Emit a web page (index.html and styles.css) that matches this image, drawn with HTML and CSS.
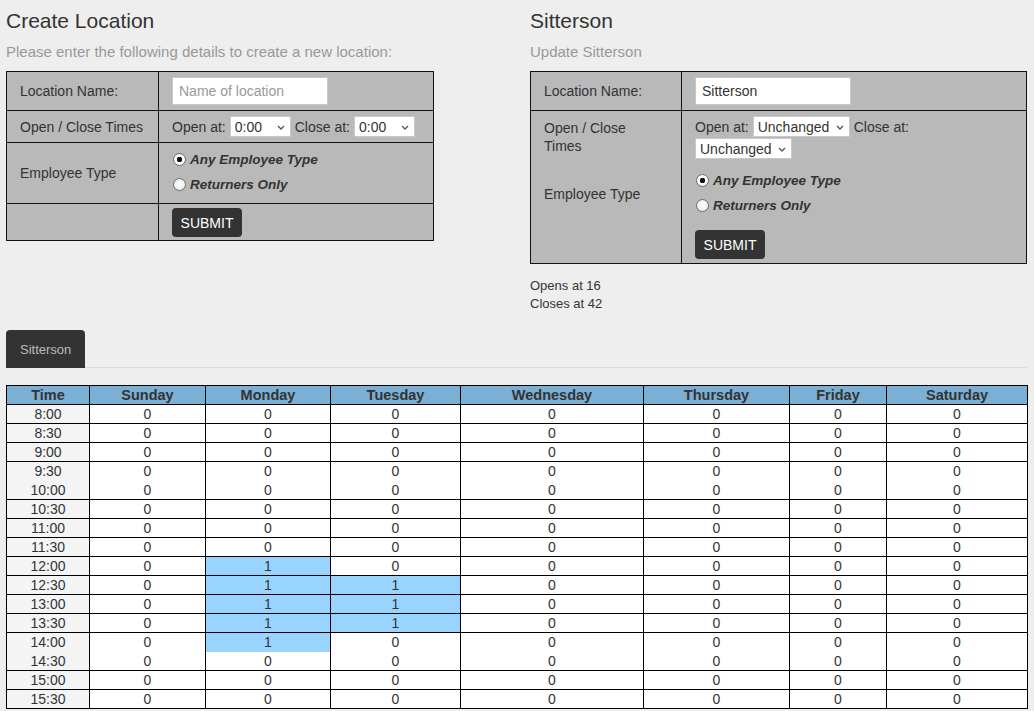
FILE: index.html
```html
<!DOCTYPE html>
<html>
<head>
<meta charset="utf-8">
<title>Locations</title>
<link rel="stylesheet" href="styles.css">
</head>
<body>
<div class="top">
  <section class="col">
    <h2 class="title">Create Location</h2>
    <p class="sub">Please enter the following details to create a new location:</p>
    <table class="form form-left">
      <tr>
        <td class="lbl">Location Name:</td>
        <td class="fld"><input class="txt" type="text" placeholder="Name of location"></td>
      </tr>
      <tr>
        <td class="lbl">Open / Close Times</td>
        <td class="fld">
          <div class="times">
            <span>Open at:</span>
            <span class="sel sel-s"><select><option>0:00</option></select><svg class="chev" viewBox="0 0 8 5" width="8" height="5"><path d="M1 1l3 3 3-3" fill="none" stroke="#555" stroke-width="1.3"/></svg></span>
            <span>Close at:</span>
            <span class="sel sel-s"><select><option>0:00</option></select><svg class="chev" viewBox="0 0 8 5" width="8" height="5"><path d="M1 1l3 3 3-3" fill="none" stroke="#555" stroke-width="1.3"/></svg></span>
          </div>
        </td>
      </tr>
      <tr>
        <td class="lbl">Employee Type</td>
        <td class="fld radios-cell">
          <label class="radio"><input type="radio" name="t1" checked><span>Any Employee Type</span></label>
          <label class="radio"><input type="radio" name="t1"><span>Returners Only</span></label>
        </td>
      </tr>
      <tr>
        <td class="lbl"></td>
        <td class="fld btn-cell"><button class="btn">SUBMIT</button></td>
      </tr>
    </table>
  </section>

  <section class="col">
    <h2 class="title">Sitterson</h2>
    <p class="sub">Update Sitterson</p>
    <table class="form form-right">
      <tr>
        <td class="lbl">Location Name:</td>
        <td class="fld"><input class="txt" type="text" value="Sitterson"></td>
      </tr>
      <tr>
        <td class="lbl lbl-top">
          <div class="lbl-wrap">Open / Close Times</div>
          <div class="lbl-emp">Employee Type</div>
        </td>
        <td class="fld fld-right">
          <div class="times times-wrap">
            <span>Open at:</span>
            <span class="sel sel-l"><select><option>Unchanged</option></select><svg class="chev" viewBox="0 0 8 5" width="8" height="5"><path d="M1 1l3 3 3-3" fill="none" stroke="#555" stroke-width="1.3"/></svg></span>
            <span>Close at:</span>
          </div>
          <div class="times">
            <span class="sel sel-l"><select><option>Unchanged</option></select><svg class="chev" viewBox="0 0 8 5" width="8" height="5"><path d="M1 1l3 3 3-3" fill="none" stroke="#555" stroke-width="1.3"/></svg></span>
          </div>
          <div class="radios">
            <label class="radio"><input type="radio" name="t2" checked><span>Any Employee Type</span></label>
            <label class="radio"><input type="radio" name="t2"><span>Returners Only</span></label>
          </div>
          <button class="btn">SUBMIT</button>
        </td>
      </tr>
    </table>
    <div class="info">
      <div>Opens at 16</div>
      <div>Closes at 42</div>
    </div>
  </section>
</div>

<nav class="tabs">
  <a class="tab">Sitterson</a>
</nav>

<table class="sched">
  <colgroup>
    <col class="w-time"><col class="w-sun"><col class="w-mon"><col class="w-tue"><col class="w-wed"><col class="w-thu"><col class="w-fri"><col class="w-sat">
  </colgroup>
  <thead>
    <tr><th>Time</th><th>Sunday</th><th>Monday</th><th>Tuesday</th><th>Wednesday</th><th>Thursday</th><th>Friday</th><th>Saturday</th></tr>
  </thead>
  <tbody>
    <tr><td class="t">8:00</td><td>0</td><td>0</td><td>0</td><td>0</td><td>0</td><td>0</td><td>0</td></tr>
    <tr><td class="t">8:30</td><td>0</td><td>0</td><td>0</td><td>0</td><td>0</td><td>0</td><td>0</td></tr>
    <tr><td class="t">9:00</td><td>0</td><td>0</td><td>0</td><td>0</td><td>0</td><td>0</td><td>0</td></tr>
    <tr class="nob"><td class="t">9:30</td><td>0</td><td>0</td><td>0</td><td>0</td><td>0</td><td>0</td><td>0</td></tr>
    <tr><td class="t">10:00</td><td>0</td><td>0</td><td>0</td><td>0</td><td>0</td><td>0</td><td>0</td></tr>
    <tr><td class="t">10:30</td><td>0</td><td>0</td><td>0</td><td>0</td><td>0</td><td>0</td><td>0</td></tr>
    <tr><td class="t">11:00</td><td>0</td><td>0</td><td>0</td><td>0</td><td>0</td><td>0</td><td>0</td></tr>
    <tr><td class="t">11:30</td><td>0</td><td>0</td><td>0</td><td>0</td><td>0</td><td>0</td><td>0</td></tr>
    <tr><td class="t">12:00</td><td>0</td><td class="hl">1</td><td>0</td><td>0</td><td>0</td><td>0</td><td>0</td></tr>
    <tr><td class="t">12:30</td><td>0</td><td class="hl">1</td><td class="hl">1</td><td>0</td><td>0</td><td>0</td><td>0</td></tr>
    <tr><td class="t">13:00</td><td>0</td><td class="hl">1</td><td class="hl">1</td><td>0</td><td>0</td><td>0</td><td>0</td></tr>
    <tr><td class="t">13:30</td><td>0</td><td class="hl">1</td><td class="hl">1</td><td>0</td><td>0</td><td>0</td><td>0</td></tr>
    <tr class="nob"><td class="t">14:00</td><td>0</td><td class="hl">1</td><td>0</td><td>0</td><td>0</td><td>0</td><td>0</td></tr>
    <tr><td class="t">14:30</td><td>0</td><td>0</td><td>0</td><td>0</td><td>0</td><td>0</td><td>0</td></tr>
    <tr><td class="t">15:00</td><td>0</td><td>0</td><td>0</td><td>0</td><td>0</td><td>0</td><td>0</td></tr>
    <tr><td class="t">15:30</td><td>0</td><td>0</td><td>0</td><td>0</td><td>0</td><td>0</td><td>0</td></tr>
  </tbody>
</table>
</body>
</html>
```

FILE: styles.css
```css
* { box-sizing: border-box; }

html, body {
  margin: 0;
  background: #eeeeee;
}

body {
  font-family: "Liberation Sans", Arial, sans-serif;
  color: #333;
  padding: 10px 7px 0 6px;
}

.top {
  display: grid;
  grid-template-columns: 524px 497px;
}

.title {
  font-size: 21px;
  font-weight: normal;
  line-height: 22px;
  margin: 0;
  color: #333;
}

.sub {
  font-size: 15px;
  line-height: 20px;
  color: #999;
  margin: 10px 0 9px;
}

.form {
  border-collapse: collapse;
  background: #b9b9b9;
  font-size: 14px;
  color: #333;
}

.form-left { width: 428px; }
.form-right { width: 497px; }

.form td {
  border: 1px solid #111;
  padding: 5px 13px;
  vertical-align: middle;
}

.form-left td.lbl { width: 152px; }
.form-right td.lbl { width: 151px; }

.txt {
  display: block;
  width: 156px;
  height: 28px;
  border: 1px solid #c8c8c8;
  background: #fff;
  font: 14px "Liberation Sans", Arial, sans-serif;
  color: #333;
  padding: 0 6px;
  margin: 0;
  outline: none;
}

.txt::placeholder { color: #999; }

.times {
  display: flex;
  align-items: center;
  gap: 4px;
  height: 21px;
  white-space: nowrap;
}

.times-wrap { margin-bottom: 1px; }

.sel {
  position: relative;
  display: inline-block;
  height: 21px;
}

.sel select {
  appearance: none;
  -webkit-appearance: none;
  height: 21px;
  border: 1px solid #c8c8c8;
  background: #fff;
  font: 14px "Liberation Sans", Arial, sans-serif;
  color: #333;
  padding: 0 0 0 4px;
  margin: 0;
  border-radius: 0;
  outline: none;
}

.sel-s select { width: 61px; }
.sel-l select { width: 97px; }

.chev {
  position: absolute;
  right: 6px;
  top: 9px;
  pointer-events: none;
}

.radios-cell {
  padding-top: 4px !important;
  padding-bottom: 6px !important;
}

.radio {
  display: flex;
  align-items: center;
  height: 25px;
  font-size: 13.5px;
  font-weight: bold;
  font-style: italic;
  color: #333;
}

.radio input {
  appearance: none;
  -webkit-appearance: none;
  width: 13px;
  height: 13px;
  margin: 0 4px 0 1px;
  border: 1px solid #6b6b6b;
  border-radius: 50%;
  background: radial-gradient(circle, #fff 0, #e6e6e6 100%);
}

.radio input:checked {
  background: radial-gradient(circle, #111 0, #111 2.5px, #fff 3px, #eee 100%);
}

.btn-cell {
  padding-top: 4px !important;
  padding-bottom: 3px !important;
}

.btn {
  display: block;
  height: 29px;
  width: 70px;
  background: #333;
  color: #fff;
  border: none;
  border-radius: 4px;
  font: 14px "Liberation Sans", Arial, sans-serif;
  padding: 0;
  margin: 0;
}

.lbl-top {
  vertical-align: top !important;
  padding-top: 8px !important;
}

.lbl-wrap {
  width: 100px;
  line-height: 18px;
}

.lbl-emp {
  margin-top: 30px;
  line-height: 18px;
}

.fld-right {
  vertical-align: top !important;
  padding-top: 5px !important;
  padding-bottom: 4px !important;
}

.radios { margin-top: 9px; }

.fld-right .btn { margin-top: 12px; }

.info {
  font-size: 13px;
  line-height: 18px;
  margin-top: 13px;
  color: #333;
}

.tabs {
  display: flex;
  margin-top: 17px;
  border-bottom: 1px solid #dcdcdc;
}

.tab {
  display: flex;
  align-items: center;
  height: 38px;
  margin-bottom: -1px;
  padding: 0 14px;
  background: #333;
  color: #bbb;
  font-size: 13px;
  border-radius: 4px 4px 0 0;
}

.sched {
  margin-top: 17px;
  width: 1021px;
  border-collapse: collapse;
  table-layout: fixed;
  font-size: 14px;
  color: #333;
  background: #fff;
}

.w-time { width: 83px; }
.w-sun { width: 116px; }
.w-mon { width: 125px; }
.w-tue { width: 130px; }
.w-wed { width: 183px; }
.w-thu { width: 146px; }
.w-fri { width: 97px; }
.w-sat { width: 141px; }

.sched th,
.sched td {
  border: 1px solid #000;
  padding: 0;
  height: 19px;
  line-height: 18px;
  text-align: center;
  white-space: nowrap;
}

.sched th {
  background: #7bafd4;
  font-weight: bold;
  font-size: 14.5px;
  color: #333;
}

.sched td.t { background: #f4f4f4; }
.sched td.hl { background: #99d4ff; }

.sched tr.nob td { border-bottom-style: hidden; }
```
